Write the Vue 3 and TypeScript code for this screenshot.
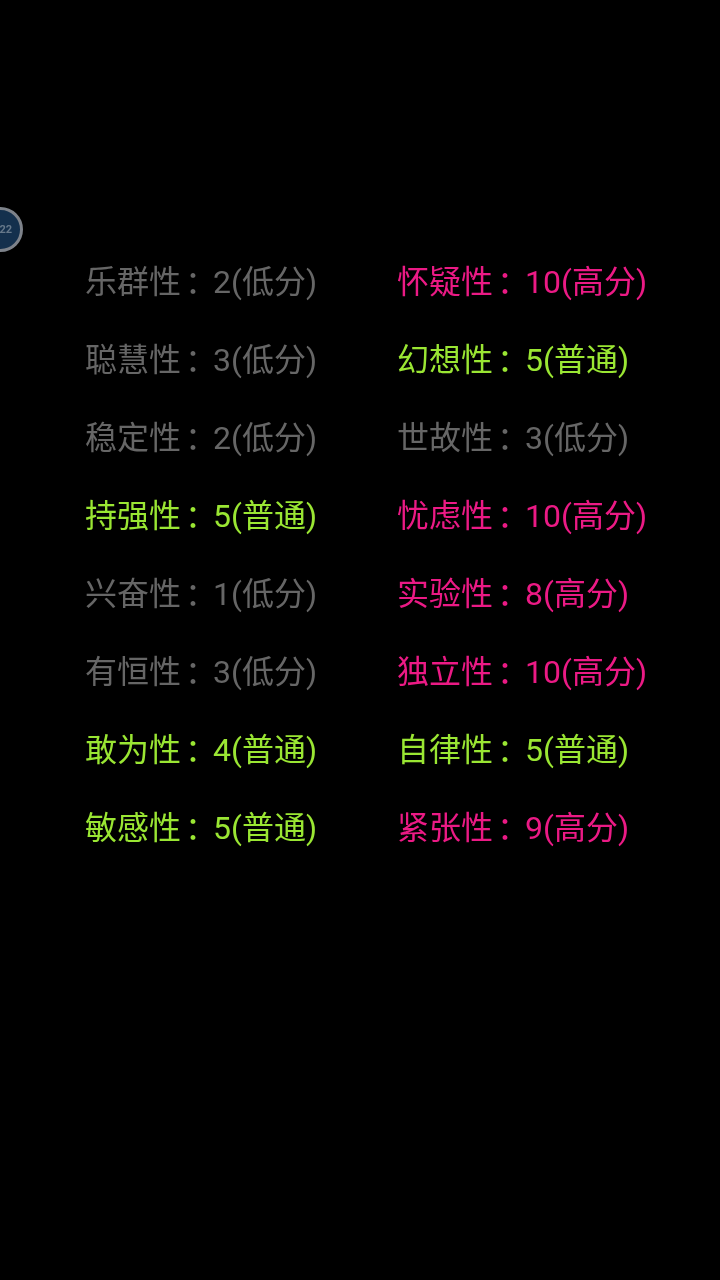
<script setup lang="ts">
interface Item { label: string; value: string; level: 'low' | 'mid' | 'high' }
const left: Item[] = [
  { label: '乐群性', value: '2(低分)', level: 'low' },
  { label: '聪慧性', value: '3(低分)', level: 'low' },
  { label: '稳定性', value: '2(低分)', level: 'low' },
  { label: '持强性', value: '5(普通)', level: 'mid' },
  { label: '兴奋性', value: '1(低分)', level: 'low' },
  { label: '有恒性', value: '3(低分)', level: 'low' },
  { label: '敢为性', value: '4(普通)', level: 'mid' },
  { label: '敏感性', value: '5(普通)', level: 'mid' },
]
const right: Item[] = [
  { label: '怀疑性', value: '10(高分)', level: 'high' },
  { label: '幻想性', value: '5(普通)', level: 'mid' },
  { label: '世故性', value: '3(低分)', level: 'low' },
  { label: '忧虑性', value: '10(高分)', level: 'high' },
  { label: '实验性', value: '8(高分)', level: 'high' },
  { label: '独立性', value: '10(高分)', level: 'high' },
  { label: '自律性', value: '5(普通)', level: 'mid' },
  { label: '紧张性', value: '9(高分)', level: 'high' },
]
</script>

<template>
  <main class="page">
    <div class="bubble"><span>22</span></div>
    <section class="grid">
      <div class="col">
        <div v-for="i in left" :key="i.label" class="row" :class="i.level">
          <span>{{ i.label }}</span><span class="colon">：</span><span>{{ i.value }}</span>
        </div>
      </div>
      <div class="col">
        <div v-for="i in right" :key="i.label" class="row" :class="i.level">
          <span>{{ i.label }}</span><span class="colon">：</span><span>{{ i.value }}</span>
        </div>
      </div>
    </section>
  </main>
</template>

<style>
html, body { margin: 0; background: #000; }
</style>

<style scoped>
.page {
  position: relative;
  width: 720px;
  height: 1280px;
  background: #000;
  overflow: hidden;
  box-sizing: border-box;
  padding: 243px 0 0 85px;
  font-family: Roboto, "Noto Sans CJK SC", sans-serif;
}
.grid { display: flex; filter: blur(0.3px); }
.col { width: 312px; display: flex; flex-direction: column; }
.row {
  height: 78px;
  line-height: 78px;
  font-size: 32px;
  white-space: nowrap;
}
.colon {
  padding-left: 4px;
  letter-spacing: -4px;
}
.low { color: #666; }
.mid { color: #9ae633; }
.high { color: #eb1a85; }
.bubble {
  position: absolute;
  left: -22px;
  top: 207px;
  width: 45px;
  height: 45px;
  box-sizing: border-box;
  border: 3px solid #7d828a;
  border-radius: 50%;
  background: #14304d;
  display: flex;
  align-items: center;
  justify-content: flex-end;
  padding-right: 8px;
  filter: blur(0.5px);
}
.bubble span { font-size: 11px; color: #66788a; font-weight: 700; }
</style>
